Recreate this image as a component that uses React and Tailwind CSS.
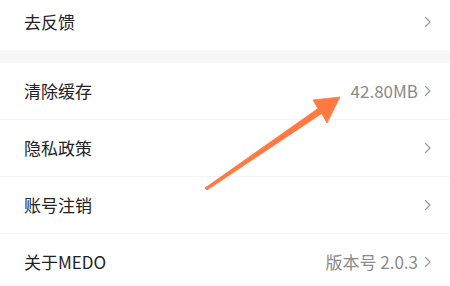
import React from "react";

const Chevron = () => (
  <svg width="8" height="12" viewBox="0 0 8 12" className="ml-[6px] shrink-0">
    <path d="M1.5 1.5 L6 6 L1.5 10.5" fill="none" stroke="#9a9a9a" strokeWidth="1.2" strokeLinecap="round" strokeLinejoin="round" />
  </svg>
);

const Row = ({ label, value, h = "h-[56px]", extra = "" }) => (
  <div className={`flex items-center justify-between pl-[24px] pr-[18px] bg-white ${h} ${extra}`}>
    <span className="text-[17px] text-[#222222]">{label}</span>
    <div className="flex items-center">
      {value && <span className="text-[17px] text-[#8a8a8a]">{value}</span>}
      <Chevron />
    </div>
  </div>
);

const Divider = () => <div className="h-px bg-[#f3f3f3]" />;

export default function App() {
  return (
    <div
      className="relative w-[450px] h-[286px] overflow-hidden bg-white"
      style={{ fontFamily: '"Noto Sans CJK SC", "Noto Sans", sans-serif' }}
    >
      <Row label="去反馈" h="h-[50px]" extra="pb-[6px]" />
      <div className="h-[13px] bg-[#f7f7f7]" />
      <Row label="清除缓存" value="42.80MB" />
      <Divider />
      <Row label="隐私政策" />
      <Divider />
      <Row label="账号注销" />
      <Divider />
      <Row label="关于MEDO" value="版本号 2.0.3" />
      <svg className="absolute left-0 top-0" width="450" height="286" viewBox="0 0 450 286">
        <polygon
          points="205,188 318,108.5 313,100 340,97 327,123 321.7,113.5 207,190"
          fill="#ff7a42"
          stroke="#ff7a42"
          strokeWidth="0.8"
          strokeLinejoin="round"
        />
      </svg>
    </div>
  );
}
